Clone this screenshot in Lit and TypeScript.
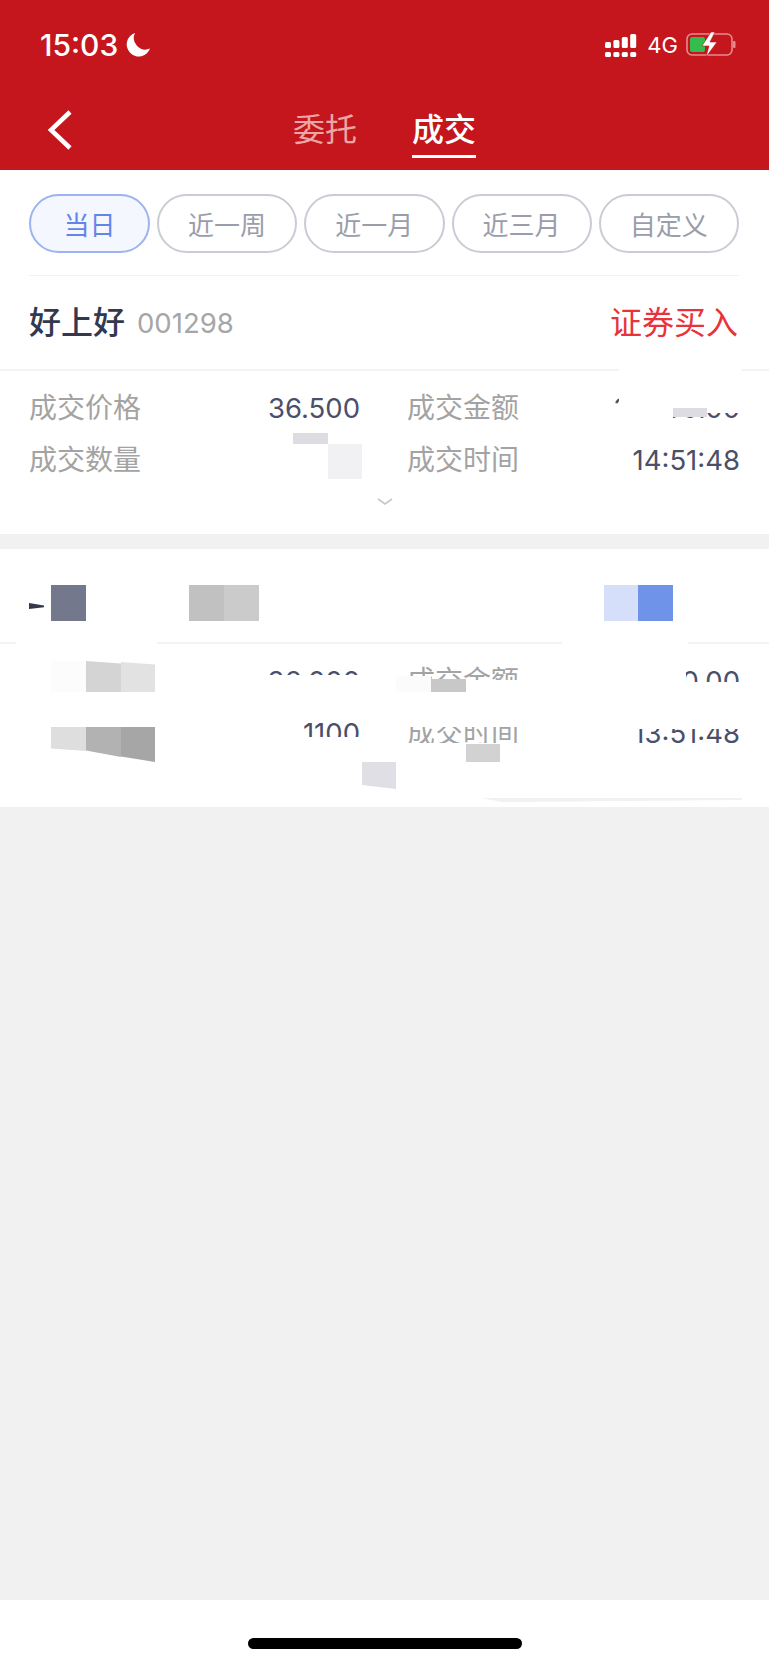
import { LitElement, css, html, nothing, svg } from 'lit';
import { customElement, property } from 'lit/decorators.js';

type Row = { label?: string; value?: string; label2?: string; value2?: string };

// redaction mosaic laid over the list: x, y, w, h, colour, optional clip
const MASKS: [number, number, number, number, string, string?][] = [
    // first card
    [619, 367, 123, 46, '#fff'],
    [612, 408, 61, 14, '#fff'],
    [673, 408, 34, 9, '#dcdce2'],
    [293, 433, 35, 11, '#dcdce2'],
    [328, 444, 34, 35, '#f1f1f4'],
    // second card, white patches that cut the text
    [16, 642, 141, 6, '#fff'],
    [562, 642, 126, 6, '#fff'],
    [262, 675, 100, 46, '#fff'],
    [396, 680, 140, 46, '#fff'],
    [600, 682, 142, 46, '#fff'],
    [600, 650, 86, 34, '#fff'],
    [262, 737, 140, 30, '#fff'],
    [400, 715, 135, 12, '#fff'],
    [400, 743, 135, 30, '#fff'],
    [600, 715, 142, 14, '#fff'],
    // second card, title row
    [29, 603, 15, 6, '#33384f', 'polygon(0 0, 100% 40%, 100% 70%, 0 100%)'],
    [51, 585, 35, 36, '#74788c'],
    [189, 585, 35, 36, '#c1c1c1'],
    [224, 585, 35, 36, '#cbcbcb'],
    [604, 585, 34, 36, '#d5dff9'],
    [638, 585, 35, 36, '#7093ea'],
    // second card, rows
    [51, 661, 35, 31, '#fcfcfc'],
    [86, 661, 35, 31, '#d4d4d4', 'polygon(0 0, 100% 8%, 100% 100%, 0 100%)'],
    [121, 662, 34, 30, '#e2e2e2', 'polygon(0 0, 100% 8%, 100% 100%, 0 100%)'],
    [396, 676, 35, 16, '#fbfbfb'],
    [431, 679, 35, 13, '#c8c8c8'],
    [51, 727, 35, 24, '#dedede', 'polygon(0 0, 100% 0, 100% 100%, 0 90%)'],
    [86, 727, 35, 30, '#b2b2b2', 'polygon(0 0, 100% 0, 100% 100%, 0 78%)'],
    [121, 727, 34, 35, '#a6a6a6', 'polygon(0 0, 100% 0, 100% 100%, 0 84%)'],
    [466, 744, 34, 18, '#d2d2d2'],
    [362, 762, 34, 27, '#dfdfe5', 'polygon(0 0, 100% 0, 100% 100%, 0 85%)'],
    [481, 798, 261, 4, '#f1f1f1', 'polygon(0 0, 100% 0, 100% 50%, 8% 100%)'],
];

@customElement('trade-card')
export class TradeCard extends LitElement {
    static styles = css`
        :host { display: block; background: #fff; font-family: Inter, Roboto, "Noto Sans CJK SC", sans-serif; }
        .title {
            height: 93px;
            padding: 0 31px 0 29px;
            display: flex;
            align-items: center;
            border-bottom: 2px solid #f3f3f3;
        }
        .name { font-size: 32px; font-weight: 500; color: #33384f; margin-bottom: 6px; }
        .code { font-size: 27.5px; color: #a6a6a6; margin-left: 12px; }
        .kind { font-size: 32px; color: #e8333c; margin-left: auto; margin-bottom: 6px; }
        .rows {
            padding: 11px 29px 0 29px;
            display: grid;
            grid-template-columns: 331px 333px;
            column-gap: 47px;
        }
        .cell { height: 52px; display: flex; align-items: center; justify-content: space-between; }
        .label { font-size: 28px; color: #a3a3a3; margin-bottom: 4px; }
        .value { font-size: 27.5px; color: #4a4f6a; }
        .more { height: 48px; display: flex; justify-content: center; padding-top: 6px; box-sizing: border-box; }
        .more svg { width: 18px; height: 10px; margin-top: 5px; }
    `;

    @property() name = '';
    @property() code = '';
    @property() kind = '';
    @property({ type: Array }) rows: Row[] = [];
    @property({ type: Boolean }) chevron = false;

    render() {
        return html`
            <div class="title">
                <span class="name">${this.name}</span>
                <span class="code">${this.code}</span>
                <span class="kind">${this.kind}</span>
            </div>
            <div class="rows">
                ${this.rows.map(r => html`
                    <div class="cell"><span class="label">${r.label}</span><span class="value">${r.value}</span></div>
                    <div class="cell"><span class="label">${r.label2}</span><span class="value">${r.value2}</span></div>
                `)}
            </div>
            <div class="more">
                ${this.chevron ? html`<svg viewBox="0 0 18 10" fill="none" stroke="#c4c6cf" stroke-width="1.6"><path d="M2 2l7 5 7-5"/></svg>` : nothing}
            </div>
        `;
    }
}

@customElement('app-root')
export class AppRoot extends LitElement {
    static styles = css`
        :host { display: block; font-family: Inter, Roboto, "Noto Sans CJK SC", sans-serif; }
        .page {
            position: relative;
            height: 1664px;
            overflow: hidden;
            background: #f1f1f1;
            display: flex;
            flex-direction: column;
        }
        .head { background: #c4161c; height: 170px; color: #fff; }
        .status {
            height: 90px;
            padding: 0 33px 0 40px;
            display: flex;
            align-items: center;
            box-sizing: border-box;
        }
        .time { font-size: 30px; font-weight: 500; }
        .moon { width: 24px; height: 24px; margin-left: 8px; }
        .status-right { margin-left: auto; display: flex; align-items: center; }
        .net { font-size: 22px; margin: 0 8px 0 10px; }
        .nav { height: 80px; position: relative; display: flex; justify-content: center; gap: 55px; }
        .back { position: absolute; left: 47px; top: 20px; width: 26px; height: 40px; }
        .tab { font-size: 32px; color: #eca6a6; height: 68px; line-height: 80px; box-sizing: border-box; }
        .tab.on { color: #fff; font-weight: 500; border-bottom: 3px solid #fff; }
        .filter { background: #fff; padding: 24px 30px 0 29px; height: 106px; box-sizing: border-box; }
        .pills {
            display: grid;
            grid-template-columns: 121px repeat(4, 1fr);
            column-gap: 7px;
            padding-bottom: 22px;
            border-bottom: 2px solid #f3f3f3;
        }
        .pill {
            height: 59px;
            box-sizing: border-box;
            border: 2px solid #c9ccd6;
            border-radius: 30px;
            font-size: 26px;
            color: #9a9dab;
            display: flex;
            align-items: center;
            justify-content: center;
        }
        .pill.on { border-color: #9db3f1; background: #f5f7fe; color: #6485e8; }
        .gap { height: 15px; flex: none; }
        .fill { flex: 1; }
        .home { height: 64px; background: #fff; display: flex; justify-content: center; padding-top: 38px; box-sizing: border-box; }
        .bar { width: 274px; height: 11px; border-radius: 6px; background: #000; }
        .mask { position: absolute; }
    `;

    renderSignal() {
        return html`<svg width="32" height="23" viewBox="0 0 32 23" fill="#fff">
            ${[8, 6, 3, 0].map((top, i) => svg`
                <rect x=${i * 8.4} y=${top} width="6" height=${14 - top} rx="1.5"/>
                <rect x=${i * 8.4} y="18" width="6" height="5" rx="1.5"/>
            `)}
        </svg>`;
    }

    renderBattery() {
        return html`<svg width="50" height="26" viewBox="0 0 50 26">
            <rect x="1" y="2" width="45" height="21" rx="5" fill="none" stroke="#e58b8e" stroke-width="1.6"/>
            <rect x="4" y="5" width="15" height="15" rx="2" fill="#34bc4e"/>
            <rect x="47" y="9" width="2.5" height="7" rx="1" fill="#e58b8e"/>
            <path d="M25 0L16 14h7l-3 11 11-15h-7l5-10z" fill="#fff" stroke="#c4161c" stroke-width=".6"/>
        </svg>`;
    }

    render() {
        const first: Row[] = [
            { label: '成交价格', value: '36.500', label2: '成交金额', value2: '36500.00' },
            { label: '成交数量', label2: '成交时间', value2: '14:51:48' },
        ];
        const second: Row[] = [
            { value: '36.000', label2: '成交金额', value2: '39600.00' },
            { value: '1100', label2: '成交时间', value2: '13:51:48' },
        ];
        return html`
            <div class="page">
                <header class="head">
                    <div class="status">
                        <span class="time">15:03</span>
                        <svg class="moon" viewBox="0 0 24 24" fill="#fff"><path d="M9 0a12 12 0 1 0 15 15.5A11.5 11.5 0 0 1 9 0z"/></svg>
                        <div class="status-right">
                            ${this.renderSignal()}
                            <span class="net">4G</span>
                            ${this.renderBattery()}
                        </div>
                    </div>
                    <nav class="nav">
                        <svg class="back" viewBox="0 0 26 40" fill="none" stroke="#fff" stroke-width="4.5"><path d="M23 2L4 20l19 18"/></svg>
                        <span class="tab">委托</span>
                        <span class="tab on">成交</span>
                    </nav>
                </header>
                <section class="filter">
                    <div class="pills">
                        ${['当日', '近一周', '近一月', '近三月', '自定义'].map((p, i) => html`
                            <span class="pill ${i === 0 ? 'on' : ''}">${p}</span>
                        `)}
                    </div>
                </section>
                <trade-card name="好上好" code="001298" kind="证券买入" .rows=${first} chevron></trade-card>
                <div class="gap"></div>
                <trade-card .rows=${second}></trade-card>
                <div class="fill"></div>
                <div class="home"><div class="bar"></div></div>
                ${MASKS.map(([x, y, w, h, c, clip]) => html`
                    <div class="mask" style="left:${x}px;top:${y}px;width:${w}px;height:${h}px;background:${c};${clip ? `clip-path:${clip}` : ''}"></div>
                `)}
            </div>
        `;
    }
}
